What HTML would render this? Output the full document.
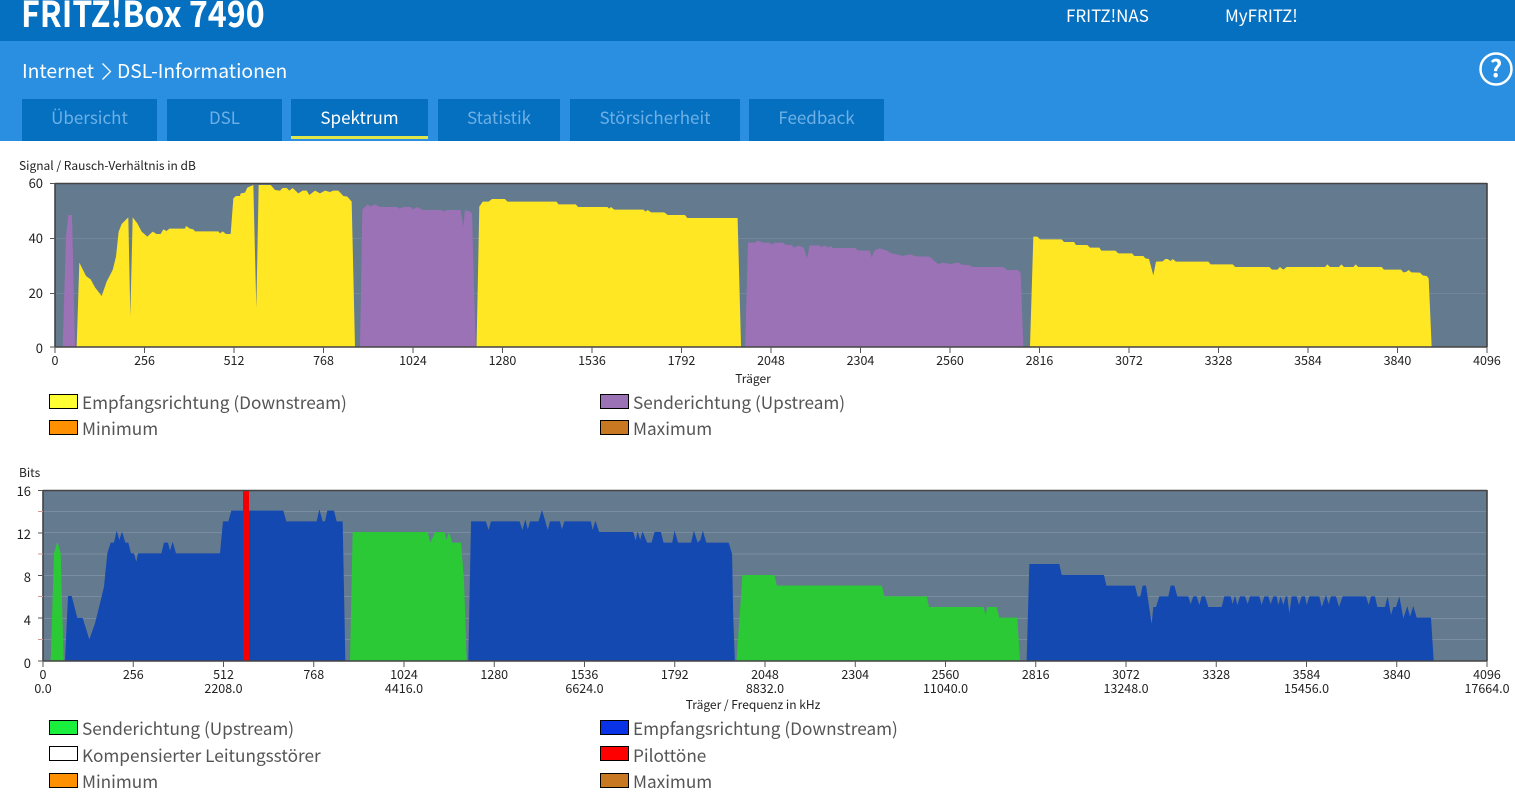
<!DOCTYPE html>
<html lang="de"><head><meta charset="utf-8"><title>FRITZ!Box 7490</title>
<style>
html,body{margin:0;padding:0;background:#fff}
body{width:1515px;height:798px;position:relative;overflow:hidden;font-family:"Noto Sans CJK JP","Liberation Sans",sans-serif}
.a{position:absolute;white-space:nowrap}
#top{left:0;top:0;width:1515px;height:41px;background:#0570c0}
#sub{left:0;top:41px;width:1515px;height:100px;background:#2a8fe0}
.t{top:99px;height:42px;background:#0570c0;color:#6db0e6;font-size:17px;line-height:35px;text-align:center}
.t.on{height:37px;color:#fff;border-bottom:3px solid #dfe64a}
.sw{width:27px;height:13px;border:1px solid #000}
.lg{font-size:17.200px;line-height:24px;color:#555;margin-top:-1px}
svg text{font-family:"Noto Sans CJK JP","Liberation Sans",sans-serif;font-size:12.500px;fill:#222}
svg text.s{font-size:12px}
svg text.y{font-size:13px}
</style></head><body>
<div class="a" id="top"></div><div class="a" id="sub"></div>
<div class="a" style="left:21px;top:-13px;font-size:36px;line-height:50px;font-weight:700;color:#fff;transform:scaleX(.893);transform-origin:0 0">FRITZ!Box 7490</div>
<div class="a" style="left:1066px;top:3px;font-size:17px;line-height:24px;color:#fff">FRITZ!NAS</div>
<div class="a" style="left:1225px;top:3px;font-size:17px;line-height:24px;color:#fff">MyFRITZ!</div>
<div class="a" style="left:22px;top:55px;font-size:19.300px;line-height:30px;color:#fff">Internet</div>
<svg class="a" style="left:100px;top:61px" width="14" height="22"><path d="M2.500 2.500 L10.500 10.500 L2.500 18.500" fill="none" stroke="#fff" stroke-width="1.300"/></svg>
<div class="a" style="left:117px;top:55px;font-size:19.300px;line-height:30px;color:#fff">DSL-Informationen</div>
<svg class="a" style="left:1478px;top:51px" width="37" height="37"><circle cx="18" cy="18" r="15.500" fill="none" stroke="#fff" stroke-width="2.500"/><text x="18" y="26" text-anchor="middle" style="font-size:24px;font-weight:700;fill:#fff">?</text></svg>
<div class="a t" style="left:22px;width:135px">Übersicht</div>
<div class="a t" style="left:167px;width:115px">DSL</div>
<div class="a t on" style="left:291px;width:137px">Spektrum</div>
<div class="a t" style="left:438px;width:122px">Statistik</div>
<div class="a t" style="left:570px;width:170px">Störsicherheit</div>
<div class="a t" style="left:749px;width:135px">Feedback</div>

<svg class="a" style="left:0;top:0" width="1515" height="798">
<!-- Chart 1 -->
<rect x="55" y="183" width="1432" height="164" fill="#647a8f"/>
<path d="M55 238.500H1487M55 293.500H1487" stroke="#72869a" stroke-width="1"/>
<g transform="translate(0,170) scale(.33333)">
<path fill="#9b72b5" d="M188 530L198 200 205 135 216 135 225 530Z"/>
<path fill="#ffe724" d="M230 530L238 278 258 318 272 328 285 352 305 378 320 335 338 300 348 260 356 185 365 162 385 142 391 440 398 142 412 160 425 185 442 200 458 185 470 192 482 192 490 178 500 183 508 176 555 176 558 168 570 176 580 178 585 184 655 184 660 190 668 184 678 192 692 192 700 85 708 78 720 78 722 70 735 68 742 53 760 45 769 415 776 45 812 45 825 60 840 62 848 54 860 54 868 62 878 54 895 70 908 62 920 62 928 75 945 62 960 70 975 62 990 66 1000 62 1015 62 1030 78 1042 80 1055 95 1065 530Z"/>
<path fill="#9b72b5" d="M1080 530L1087 118 1103 103 1112 110 1125 103 1140 111 1190 111 1198 116 1210 111 1232 111 1240 118 1252 111 1268 120 1325 120 1332 125 1338 120 1382 120 1390 170 1395 120 1410 125 1416 130 1427 530Z"/>
</g>
<g transform="translate(480,170) scale(.34439,.33333)">
<path fill="#ffe724" d="M-10 530L-2 110 8 95 25 95 35 87 72 87 80 95 222 95 228 103 278 103 285 111 370 111 375 116 380 111 390 119 475 119 480 125 487 120 497 127 535 127 545 135 595 135 602 144 748 144 758 530Z"/>
<path fill="#9b72b5" d="M770 530L778 218 800 218 805 211 820 218 840 218 848 224 855 218 878 218 890 225 905 225 912 233 925 227 940 233 950 265 957 226 985 226 990 232 1000 226 1012 233 1018 228 1025 234 1090 234 1097 241 1132 242 1137 262 1145 242 1160 235 1180 241 1195 250 1218 255 1225 258 1250 253 1265 259 1305 260 1330 282 1345 278 1365 282 1390 278 1398 284 1425 286 1430 291 1520 291 1527 300 1528 530Z"/>
</g>
<g transform="translate(1000,170) scale(.33333)">
<path fill="#9b72b5" d="M15 530L15 292 20 300 55 300 62 310 70 530Z"/>
<path fill="#ffe724" d="M90 530L100 200 112 200 120 208 185 208 192 216 222 216 228 225 262 225 270 233 298 233 304 242 346 242 355 250 396 250 403 258 430 258 436 265 447 267 460 316 468 275 488 274 496 267 503 267 512 273 518 267 528 275 625 275 632 283 698 283 706 291 808 291 816 299 832 299 840 291 850 299 860 291 975 291 982 283 990 291 1017 291 1024 283 1032 291 1060 291 1067 283 1075 291 1145 291 1152 299 1203 299 1210 307 1218 306 1226 300 1234 307 1260 308 1268 316 1280 318 1286 325 1295 530Z"/>
</g>
<path d="M55 183.500H1487M55 347H1487M55 183V347M1487 183V347" stroke="#444" stroke-width="1.600" fill="none"/>
<path d="M50 183.500H55M50 238.500H55M50 293.500H55M50 347H55M55 347v6M144.500 347v6M234 347v6M323.500 347v6M413 347v6M502.500 347v6M592 347v6M681.500 347v6M771 347v6M860.500 347v6M950 347v6M1039.500 347v6M1129 347v6M1218.500 347v6M1308 347v6M1397.500 347v6M1487 347v6" stroke="#555" stroke-width="1"/>
<text class="s" x="19" y="170">Signal / Rausch-Verhältnis in dB</text>
<g text-anchor="end"><text class="y" x="43" y="188">60</text><text class="y" x="43" y="243">40</text><text class="y" x="43" y="298">20</text><text class="y" x="43" y="353">0</text></g>
<g text-anchor="middle"><text x="55" y="365">0</text><text x="144.500" y="365">256</text><text x="234" y="365">512</text><text x="323.500" y="365">768</text><text x="413" y="365">1024</text><text x="502.500" y="365">1280</text><text x="592" y="365">1536</text><text x="681.500" y="365">1792</text><text x="771" y="365">2048</text><text x="860.500" y="365">2304</text><text x="950" y="365">2560</text><text x="1039.500" y="365">2816</text><text x="1129" y="365">3072</text><text x="1218.500" y="365">3328</text><text x="1308" y="365">3584</text><text x="1397.500" y="365">3840</text><text x="1487" y="365">4096</text>
<text class="s" x="753" y="383">Träger</text></g>

<!-- Chart 2 -->
<rect x="43" y="490" width="1444" height="171" fill="#647a8f"/>
<path d="M43 511.500H1487M43 532.500H1487M43 554H1487M43 575.500H1487M43 596.500H1487M43 618.500H1487M43 639.500H1487" stroke="#7a8da0" stroke-width="1"/>
<g transform="translate(0,480) scale(.33333)">
<path fill="#2bc935" d="M152 542L162 220 172 185 182 220 191 542Z"/>
<path fill="#1449b2" d="M195 542L204 348 215 348 232 414 248 414 268 478 285 430 300 370 312 320 322 220 332 188 342 188 350 152 358 180 366 155 376 188 385 188 393 220 402 220 409 245 414 220 484 220 492 188 504 188 510 212 518 185 528 220 660 220 669 124 685 124 694 92 850 92 859 124 950 124 958 88 968 124 975 124 982 92 1002 92 1010 124 1028 124 1036 542Z"/>
<path fill="#2bc935" d="M1050 542L1058 156 1283 156 1291 188 1305 156 1333 156 1340 180 1347 156 1357 188 1383 188 1392 300 1400 542Z"/>
</g>
<g transform="translate(480,480) scale(.34439,.33333)">
<path fill="#1449b2" d="M-34 542L-26 124 17 124 25 150 32 124 115 124 123 150 130 124 132 120 139 148 145 124 170 124 180 90 197 150 203 124 232 124 238 148 245 124 322 124 327 150 335 122 346 156 445 156 452 182 458 154 465 180 472 154 485 188 498 188 507 156 525 156 533 188 558 188 565 152 575 188 613 188 621 152 632 188 640 180 647 152 657 188 722 188 732 222 735 400 740 542Z"/>
<path fill="#2bc935" d="M745 542L762 285 855 285 862 317 1167 317 1174 349 1297 349 1304 381 1462 381 1468 405 1473 381 1500 381 1508 413 1560 413 1568 542Z"/>
</g>
<g transform="translate(1000,480) scale(.33333)">
<path fill="#1449b2" d="M80 542L88 252 178 252 185 285 312 285 319 317 405 317 413 349 421 349 428 317 438 317 455 432 460 381 468 381 478 349 505 349 512 317 523 317 532 349 565 349 572 372 580 349 590 349 598 375 605 349 615 349 625 381 665 381 673 349 692 349 698 372 705 346 712 375 720 349 735 349 743 372 750 349 778 349 785 375 793 349 805 349 812 372 820 349 830 349 835 375 842 349 850 375 857 349 862 349 868 400 875 349 890 349 897 375 905 349 915 349 920 375 928 349 958 349 965 381 978 345 986 372 993 349 1008 349 1017 381 1028 349 1098 349 1106 375 1113 349 1125 349 1132 381 1155 381 1163 349 1173 405 1180 381 1188 381 1198 349 1210 415 1222 378 1230 410 1240 378 1250 413 1293 413 1301 542Z"/>
</g>
<rect x="243" y="490" width="6" height="171" fill="#f50000"/>
<path d="M43 490.500H1487M43 661H1487M43 490V661M1487 490V661" stroke="#444" stroke-width="1.600" fill="none"/>
<path d="M38 490.500H43M38 533H43M38 575.500H43M38 618H43M38 661H43M43 661v6M133.250 661v6M223.500 661v6M313.750 661v6M404 661v6M494.250 661v6M584.500 661v6M674.750 661v6M765 661v6M855.250 661v6M945.500 661v6M1035.750 661v6M1126 661v6M1216.250 661v6M1306.500 661v6M1396.750 661v6M1487 661v6" stroke="#555" stroke-width="1"/>
<path d="M38 511.500H43M38 554H43M38 596.500H43M38 639.500H43" stroke="#c99" stroke-width="1"/>
<text class="s" x="19" y="477">Bits</text>
<g text-anchor="end"><text class="y" x="31" y="496">16</text><text class="y" x="31" y="539">12</text><text class="y" x="31" y="582">8</text><text class="y" x="31" y="625">4</text><text class="y" x="31" y="668">0</text></g>
<g text-anchor="middle"><text x="43" y="679">0</text><text x="133.250" y="679">256</text><text x="223.500" y="679">512</text><text x="313.750" y="679">768</text><text x="404" y="679">1024</text><text x="494.250" y="679">1280</text><text x="584.500" y="679">1536</text><text x="674.750" y="679">1792</text><text x="765" y="679">2048</text><text x="855.250" y="679">2304</text><text x="945.500" y="679">2560</text><text x="1035.750" y="679">2816</text><text x="1126" y="679">3072</text><text x="1216.250" y="679">3328</text><text x="1306.500" y="679">3584</text><text x="1396.750" y="679">3840</text><text x="1487" y="679">4096</text>
<text x="43" y="693">0.0</text><text x="223.500" y="693">2208.0</text><text x="404" y="693">4416.0</text><text x="584.500" y="693">6624.0</text><text x="765" y="693">8832.0</text><text x="945.500" y="693">11040.0</text><text x="1126" y="693">13248.0</text><text x="1306.500" y="693">15456.0</text><text x="1487" y="693">17664.0</text>
<text class="s" x="753" y="709">Träger / Frequenz in kHz</text></g>
</svg>

<div class="a sw" style="left:49px;top:394px;background:#ffff33"></div><div class="a lg" style="left:82px;top:391px">Empfangsrichtung (Downstream)</div>
<div class="a sw" style="left:600px;top:394px;background:#9b72b5"></div><div class="a lg" style="left:633px;top:391px">Senderichtung (Upstream)</div>
<div class="a sw" style="left:49px;top:420px;background:#ff9000"></div><div class="a lg" style="left:82px;top:417px">Minimum</div>
<div class="a sw" style="left:600px;top:420px;background:#c87820"></div><div class="a lg" style="left:633px;top:417px">Maximum</div>
<div class="a sw" style="left:49px;top:720px;background:#19ef3c"></div><div class="a lg" style="left:82px;top:717px">Senderichtung (Upstream)</div>
<div class="a sw" style="left:600px;top:720px;background:#0a32e6"></div><div class="a lg" style="left:633px;top:717px">Empfangsrichtung (Downstream)</div>
<div class="a sw" style="left:49px;top:746px;background:#fff"></div><div class="a lg" style="left:82px;top:744px">Kompensierter Leitungsstörer</div>
<div class="a sw" style="left:600px;top:746px;background:#f00"></div><div class="a lg" style="left:633px;top:744px">Pilottöne</div>
<div class="a sw" style="left:49px;top:773px;background:#ff9000"></div><div class="a lg" style="left:82px;top:770px">Minimum</div>
<div class="a sw" style="left:600px;top:773px;background:#c87820"></div><div class="a lg" style="left:633px;top:770px">Maximum</div>
</body></html>
